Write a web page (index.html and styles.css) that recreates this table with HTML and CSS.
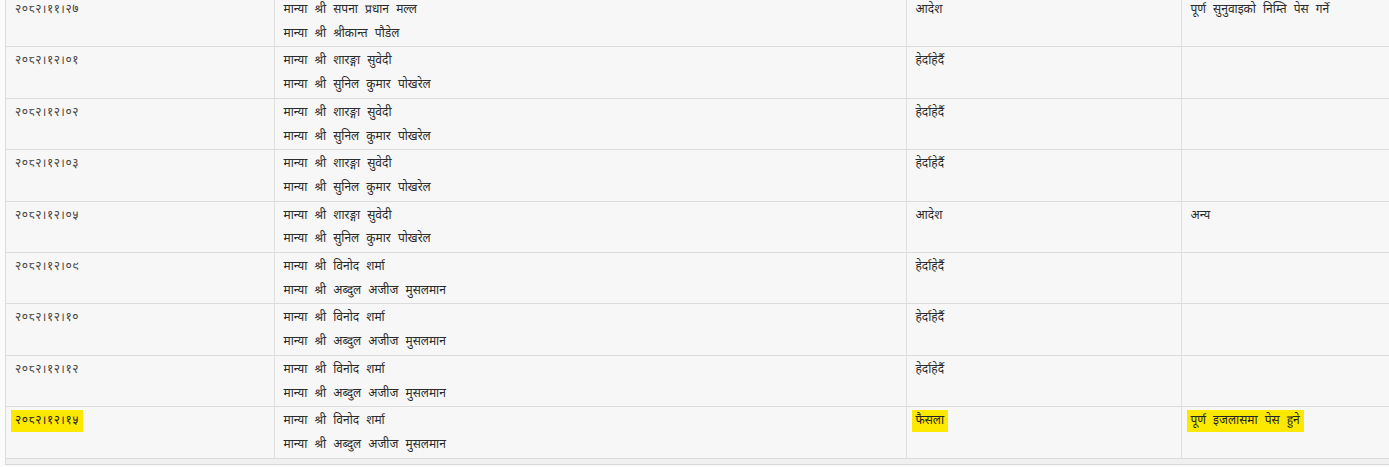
FILE: index.html
```html
<!DOCTYPE html>
<html lang="ne">
<head>
<meta charset="utf-8">
<title>सुनुवाइ सूची</title>
<link rel="stylesheet" href="styles.css">
</head>
<body>
<div class="frame">
  <table class="hearings">
    <colgroup>
      <col class="c-date"><col class="c-judges"><col class="c-type"><col class="c-result">
    </colgroup>
    <tbody>
      <tr>
        <td>२०८२।११।२७</td>
        <td><div class="ln">मान्या श्री सपना प्रधान मल्ल</div><div class="ln">मान्या श्री श्रीकान्त पौडेल</div></td>
        <td>आदेश</td>
        <td>पूर्ण सुनुवाइको निम्ति पेस गर्ने</td>
      </tr>
      <tr>
        <td>२०८२।१२।०१</td>
        <td><div class="ln">मान्या श्री शारङ्गा सुवेदी</div><div class="ln">मान्या श्री सुनिल कुमार पोखरेल</div></td>
        <td>हेर्दाहेर्दै</td>
        <td></td>
      </tr>
      <tr>
        <td>२०८२।१२।०२</td>
        <td><div class="ln">मान्या श्री शारङ्गा सुवेदी</div><div class="ln">मान्या श्री सुनिल कुमार पोखरेल</div></td>
        <td>हेर्दाहेर्दै</td>
        <td></td>
      </tr>
      <tr>
        <td>२०८२।१२।०३</td>
        <td><div class="ln">मान्या श्री शारङ्गा सुवेदी</div><div class="ln">मान्या श्री सुनिल कुमार पोखरेल</div></td>
        <td>हेर्दाहेर्दै</td>
        <td></td>
      </tr>
      <tr>
        <td>२०८२।१२।०५</td>
        <td><div class="ln">मान्या श्री शारङ्गा सुवेदी</div><div class="ln">मान्या श्री सुनिल कुमार पोखरेल</div></td>
        <td>आदेश</td>
        <td>अन्य</td>
      </tr>
      <tr>
        <td>२०८२।१२।०९</td>
        <td><div class="ln">मान्या श्री विनोद शर्मा</div><div class="ln">मान्या श्री अब्दुल अजीज मुसलमान</div></td>
        <td>हेर्दाहेर्दै</td>
        <td></td>
      </tr>
      <tr>
        <td>२०८२।१२।१०</td>
        <td><div class="ln">मान्या श्री विनोद शर्मा</div><div class="ln">मान्या श्री अब्दुल अजीज मुसलमान</div></td>
        <td>हेर्दाहेर्दै</td>
        <td></td>
      </tr>
      <tr>
        <td>२०८२।१२।१२</td>
        <td><div class="ln">मान्या श्री विनोद शर्मा</div><div class="ln">मान्या श्री अब्दुल अजीज मुसलमान</div></td>
        <td>हेर्दाहेर्दै</td>
        <td></td>
      </tr>
      <tr>
        <td><mark class="hl">२०८२।१२।१५</mark></td>
        <td><div class="ln">मान्या श्री विनोद शर्मा</div><div class="ln">मान्या श्री अब्दुल अजीज मुसलमान</div></td>
        <td><mark class="hl">फैसला</mark></td>
        <td><mark class="hl">पूर्ण इजलासमा पेस हुने</mark></td>
      </tr>
    </tbody>
  </table>
</div>
</body>
</html>
```

FILE: styles.css
```css
html, body {
  margin: 0;
  padding: 0;
  background: #fbfbfb;
  overflow: hidden;
}

body {
  font-family: "Noto Sans Devanagari", "Lohit Devanagari", "Mangal", "Noto Sans", "DejaVu Sans", sans-serif;
  font-size: 12px;
  color: #2b2b2b;
}

.frame {
  margin: -4px 0 0 5px;
  width: 1420px;
  padding-bottom: 5px;
  background: #f0f0f0;
  border-left: 1px solid #dcdcdc;
  border-bottom: 1px solid #d6d6d6;
}

.hearings {
  border-collapse: collapse;
  table-layout: fixed;
  width: 1420px;
  background: #f7f7f7;
}

.c-date { width: 268px; }
.c-judges { width: 632px; }
.c-type { width: 275px; }
.c-result { width: 245px; }

.hearings td {
  vertical-align: top;
  padding: 3px 9px 0 9px;
  height: 47.4px;
  line-height: 23.7px;
  border-right: 1px solid #dedede;
  border-bottom: 1px solid #dcdcdc;
  word-spacing: 4px;
  white-space: nowrap;
}

.hearings td:first-child {
  color: #444;
  word-spacing: 0;
  letter-spacing: 0.5px;
}

.ln {
  line-height: 23.7px;
}

.hl {
  background: #fde800;
  color: #222;
  padding: 3px 4px;
  margin: 0 -4px;
}
```
